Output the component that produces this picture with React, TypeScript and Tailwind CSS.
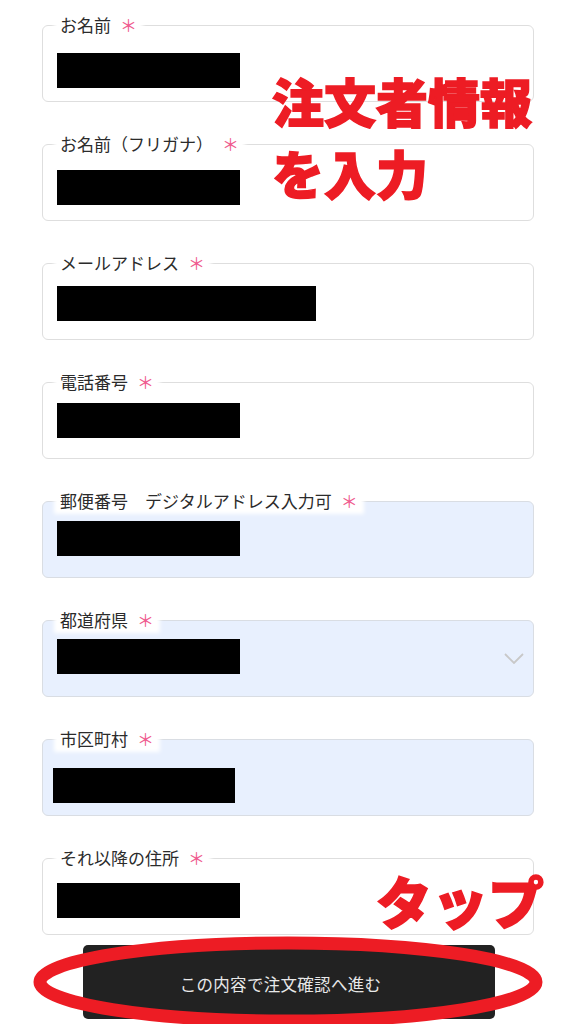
import React from "react";

type Field = {
  label: string;
  blue?: boolean;
  barWidth: number;
  padLeft?: number;
  select?: boolean;
};

const fields: Field[] = [
  { label: "お名前", barWidth: 183 },
  { label: "お名前（フリガナ）", barWidth: 183 },
  { label: "メールアドレス", barWidth: 259 },
  { label: "電話番号", barWidth: 183 },
  { label: "郵便番号　デジタルアドレス入力可", blue: true, barWidth: 183 },
  { label: "都道府県", blue: true, barWidth: 183, select: true },
  { label: "市区町村", blue: true, barWidth: 182, padLeft: 10 },
  { label: "それ以降の住所", barWidth: 183 },
];

const tops = [53 - 25, 170 - 144, 286 - 263, 403 - 382, 521 - 501, 639 - 620, 768 - 739, 883 - 858];

function FieldBox({ f, idx }: { f: Field; idx: number }) {
  const pt = tops[idx] - 1;
  return (
    <div
      className={
        f.blue
          ? "relative h-[77px] rounded-[6px] border border-[#d9dde3] bg-[#e8f0fe]"
          : "relative h-[77px] rounded-[6px] border border-[#dedede] bg-white"
      }
    >
      <div className="absolute left-[14px] top-[-11px] flex items-center bg-white px-[3px] text-[17px] leading-[20px] text-[#2b2b2b] shadow-[0_0_4px_3px_#fff]">
        <span>{f.label}</span>
        <span className="ml-[9px] text-[#ef5b8f]">＊</span>
      </div>
      <div
        className={f.padLeft === 10 ? "flex pl-[10px]" : "flex pl-[14px]"}
        style={{ paddingTop: pt }}
      >
        <div className="h-[35px] bg-black" style={{ width: f.barWidth }} />
        {f.select && (
          <svg
            className="ml-auto mr-[9px] mt-[14px]"
            width="20"
            height="11"
            viewBox="0 0 20 11"
            fill="none"
          >
            <path d="M1 1L10 10L19 1" stroke="#c8c8c8" strokeWidth="1.8" />
          </svg>
        )}
      </div>
    </div>
  );
}

export default function App() {
  return (
    <div
      className="relative h-[1024px] w-[576px] overflow-hidden bg-white"
      style={{ fontFamily: '"Noto Sans CJK JP", "Noto Sans", sans-serif' }}
    >
      <div className="flex flex-col gap-[42px] px-[42px] pt-[25px]">
        {fields.map((f, i) => (
          <FieldBox key={i} f={f} idx={i} />
        ))}
      </div>
      <div className="mt-[10px] flex justify-center pl-[1px]">
        <button className="flex h-[74px] w-[412px] items-center justify-center rounded-[5px] bg-[#222222] pr-[16px] pt-[5px] text-[16.5px] tracking-[0.3px] text-[#e8e8e8]">
          この内容で注文確認へ進む
        </button>
      </div>

      <div className="absolute left-[272px] top-[65px] text-[52px] font-black leading-[72px] text-[#ed1c24] [-webkit-text-stroke:1.5px_#ed1c24]">
        <div>注文者情報</div>
        <div>を入力</div>
      </div>
      <div className="absolute left-[376px] top-[870px] text-[56px] font-black leading-[60px] text-[#ed1c24] [-webkit-text-stroke:1.5px_#ed1c24]">
        タップ
      </div>
      <svg className="pointer-events-none absolute left-0 top-0" width="576" height="1024" viewBox="0 0 576 1024">
        <ellipse cx="288" cy="982" rx="248" ry="39" fill="none" stroke="#ed1c24" strokeWidth="13" />
      </svg>
    </div>
  );
}
